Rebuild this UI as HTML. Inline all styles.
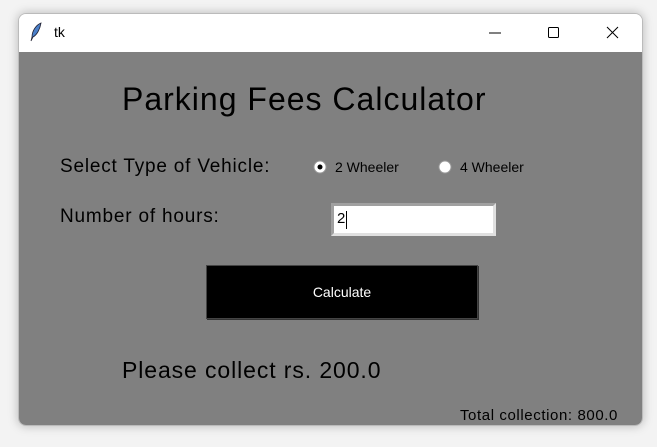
<!DOCTYPE html><html><head><style>
body{margin:0;width:657px;height:447px;background:#f3f3f3;position:relative;overflow:hidden;font-family:"Liberation Sans",sans-serif}
.win{position:absolute;left:18px;top:13px;width:625px;height:413px;border-radius:8px;overflow:hidden;box-shadow:0 0 10px rgba(0,0,0,.25);border:1px solid #bbb;box-sizing:border-box}
.tb{height:38px;background:#fff;position:relative}
.c{position:absolute;left:0;top:38px;right:0;bottom:0;background:#808080}
.a{position:absolute;white-space:nowrap;color:#000}
</style></head><body>
<div class="win">
<div class="tb">
<svg style="position:absolute;left:10px;top:8px" width="14" height="20" viewBox="0 0 14 20"><path d="M12 1C7 3 3 9 3 15L2 19L4 15C8 13 11 7 12 1Z" fill="#4a7fc8" stroke="#223" stroke-width=".8"/></svg>
<span class="a" style="left:35px;top:10px;font-size:14px">tk</span>
<svg style="position:absolute;left:470px;top:12px" width="140" height="14"><line x1="0" y1="7" x2="12" y2="7" stroke="#000"/><rect x="59.5" y="1.5" width="10" height="10" fill="none" stroke="#000" rx="1"/><path d="M118 1L129 12M129 1L118 12" stroke="#000"/></svg>
</div>
<div class="c">
<span class="a" style="left:103px;top:29px;font-size:32px;letter-spacing:1px">Parking Fees Calculator</span>
<span class="a" style="left:41px;top:104px;font-size:19px;letter-spacing:0.8px">Select Type of Vehicle:</span>
<span class="a" style="left:41px;top:154px;font-size:19px;letter-spacing:0.8px">Number of hours:</span>
<svg class="a" style="left:294px;top:108px" width="14" height="14"><circle cx="7" cy="7" r="6" fill="#fff" stroke="#999"/><circle cx="7" cy="7" r="2.5" fill="#000"/></svg>
<span class="a" style="left:316px;top:107px;font-size:14px">2 Wheeler</span>
<svg class="a" style="left:419px;top:108px" width="14" height="14"><circle cx="7" cy="7" r="6" fill="#fff" stroke="#999"/></svg>
<span class="a" style="left:441px;top:107px;font-size:14px">4 Wheeler</span>
<div class="a" style="left:312px;top:151px;width:165px;height:33px;background:#fff;border:3px solid;border-color:#a0a0a0 #e0e0e0 #e0e0e0 #a0a0a0;box-sizing:border-box"><span style="position:absolute;left:3px;top:4px;font-size:15px">2</span><span style="position:absolute;left:12px;top:5px;width:1px;height:18px;background:#000"></span></div>
<div class="a" style="left:187px;top:213px;width:272px;height:54px;background:#000;border:1px solid #444;box-shadow:1px 1px 0 #333;box-sizing:border-box;color:#fff;font-size:14px;text-align:center;line-height:52px">Calculate</div>
<span class="a" style="left:103px;top:305px;font-size:23px;letter-spacing:0.9px">Please collect rs. 200.0</span>
<span class="a" style="right:24px;top:355px;font-size:15px;letter-spacing:0.6px">Total collection: 800.0</span>
</div></div>
</body></html>
